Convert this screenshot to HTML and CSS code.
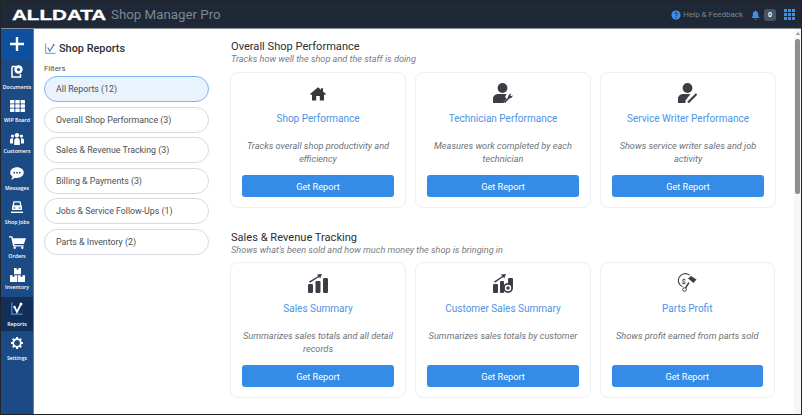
FILE: index.html
```html
<!DOCTYPE html>
<html lang="en">
<head>
<meta charset="utf-8">
<title>Shop Reports</title>
<link rel="stylesheet" href="styles.css">
</head>
<body>
<div class="app">
  <header class="topbar">
    <div class="brand"><span class="logo">ALLDATA</span><span class="product">Shop Manager Pro</span></div>
    <div class="top-actions">
      <svg class="help-ic" viewBox="0 0 12 12"><circle cx="6" cy="6" r="5.500" fill="#3d8fe8"/><path d="M4.400 4.700a1.600 1.600 0 1 1 2.400 1.400c-.5.3-.8.6-.8 1.100" fill="none" stroke="#1f2835" stroke-width="1.200"/><rect x="5.400" y="8.200" width="1.200" height="1.200" fill="#1f2835"/></svg>
      <span class="help">Help &amp; Feedback</span>
      <svg class="bell" viewBox="0 0 10 11"><path d="M5 0.500c.5 0 .8.300.8.800 1.500.4 2.200 1.500 2.200 3v2.400l1.200 1.500v.6H.8v-.6L2 6.700V4.300c0-1.500.7-2.600 2.200-3 0-.5.3-.8.8-.8zM3.800 9.600h2.400c0 .7-.5 1.100-1.200 1.100s-1.200-.4-1.200-1.100z" fill="#3d8fe8"/></svg>
      <span class="badge">0</span>
      <svg class="apps" viewBox="0 0 11 11"><g fill="#3d8fe8"><rect x="0" y="0" width="3" height="3"/><rect x="4" y="0" width="3" height="3"/><rect x="8" y="0" width="3" height="3"/><rect x="0" y="4" width="3" height="3"/><rect x="4" y="4" width="3" height="3"/><rect x="8" y="4" width="3" height="3"/><rect x="0" y="8" width="3" height="3"/><rect x="4" y="8" width="3" height="3"/><rect x="8" y="8" width="3" height="3"/></g></svg>
    </div>
  </header>
  <div class="body">
    <nav class="sidenav">
      <div class="add"><svg viewBox="0 0 14 14" class="add-ic"><path d="M5.800 0h2.400v5.800H14v2.400H8.200V14H5.800V8.200H0V5.800h5.800z" fill="#fff"/></svg></div>
      <a class="nav-item item-docs"><svg viewBox="0 0 12 13" class="nav-ic"><path d="M1 1.500h4M1 1.500v10.500h8.500V9" fill="none" stroke="#fff" stroke-width="1.500"/><circle cx="7.500" cy="4.500" r="4.200" fill="#fff"/><circle cx="7.500" cy="4.500" r="1.600" fill="#1b4a85"/></svg><span>Documents</span></a>
      <a class="nav-item item-wip"><svg viewBox="0 0 15 12" class="nav-ic"><g fill="#fff"><rect width="4.400" height="3.500" rx=".5"/><rect x="5.300" width="4.400" height="3.500" rx=".5"/><rect x="10.600" width="4.400" height="3.500" rx=".5"/><rect y="4.250" width="4.400" height="3.500" rx=".5"/><rect x="5.300" y="4.250" width="4.400" height="3.500" rx=".5"/><rect x="10.600" y="4.250" width="4.400" height="3.500" rx=".5"/><rect y="8.500" width="4.400" height="3.500" rx=".5"/><rect x="5.300" y="8.500" width="4.400" height="3.500" rx=".5"/><rect x="10.600" y="8.500" width="4.400" height="3.500" rx=".5"/></g></svg><span>WIP Board</span></a>
      <a class="nav-item item-cust"><svg viewBox="0 0 14 12" class="nav-ic"><g fill="#fff"><circle cx="7" cy="2.300" r="2.200"/><circle cx="2.500" cy="3" r="1.600"/><circle cx="11.500" cy="3" r="1.600"/><path d="M4.200 12V7.500c0-1.600 1.200-2.600 2.800-2.600s2.800 1 2.800 2.600V12zM0 10.500V7.200c0-1.200 1-1.900 2.100-1.900.5 0 .9.100 1.200.3C3 6.100 3 6.800 3 7.500v3zM14 10.500V7.200c0-1.200-1-1.900-2.100-1.900-.5 0-.9.100-1.200.3.300.5.300 1.200.3 1.900v3z"/></g></svg><span>Customers</span></a>
      <a class="nav-item item-msg"><svg viewBox="0 0 14 13" class="nav-ic"><path d="M7 .3c3.800 0 6.800 2.300 6.800 5.300S10.800 11 7 11c-.8 0-1.500-.1-2.200-.3C3.800 11.800 2.400 12.500 1 12.600c.8-.8 1.300-1.900 1.500-2.900C1.100 8.700.2 7.300.2 5.600.2 2.600 3.200.3 7 .3z" fill="#fff"/><g fill="#1b4a85"><circle cx="4.200" cy="5.700" r=".9"/><circle cx="7" cy="5.700" r=".9"/><circle cx="9.800" cy="5.700" r=".9"/></g></svg><span>Messages</span></a>
      <a class="nav-item item-jobs"><svg viewBox="0 0 12 12" class="nav-ic"><path d="M3 .8h6l1 4.200H2z" fill="none" stroke="#fff" stroke-width="1.300"/><path d="M1 5.200h10V9H1z" fill="#fff"/><rect x="2.500" y="6.500" width="1.700" height="1.100" fill="#1b4a85"/><rect x="7.800" y="6.500" width="1.700" height="1.100" fill="#1b4a85"/><rect x="0" y="10.600" width="12" height="1.400" fill="#fff"/></svg><span>Shop Jobs</span></a>
      <a class="nav-item item-orders"><svg viewBox="0 0 17 13" class="nav-ic"><path d="M0 .3h3.300l.7 2H17l-2.100 5.700H5.200l.5 1.200h9v1.200H4.200L2.200 1.500H0z" fill="#fff"/><circle cx="5.700" cy="11.800" r="1.200" fill="#fff"/><circle cx="13.300" cy="11.800" r="1.200" fill="#fff"/></svg><span>Orders</span></a>
      <a class="nav-item item-inv"><svg viewBox="0 0 15 14" class="nav-ic"><g fill="#fff"><path d="M4 0h2.700v1.800h1.600V0H11v6.300H4z"/><path d="M0 7.200h2.700V9h1.500V7.200h3V14H0z"/><path d="M7.800 7.200h3V9h1.500V7.200H15V14H7.800z"/></g></svg><span>Inventory</span></a>
      <a class="nav-item item-rep active"><svg viewBox="0 0 12 13" class="nav-ic"><path d="M.8 .5v11.700h10.700" fill="none" stroke="#3d8fe8" stroke-width="1.300"/><path d="M3.500 5l2.500 5 4-8" fill="none" stroke="#fff" stroke-width="1.700"/><circle cx="10" cy="2" r="1.500" fill="#fff"/><circle cx="3.500" cy="5" r="1.200" fill="#fff"/></svg><span>Reports</span></a>
      <a class="nav-item item-set"><svg viewBox="0 0 12 12" class="nav-ic"><circle cx="6" cy="6" r="3.800" fill="none" stroke="#fff" stroke-width="1.700"/><g stroke="#fff" stroke-width="2"><path d="M6 0v2M6 10v2M0 6h2M10 6h2M1.800 1.800l1.400 1.400M8.800 8.800l1.400 1.400M1.800 10.200l1.400-1.400M8.800 3.200l1.400-1.400"/></g></svg><span>Settings</span></a>
    </nav>
    <aside class="filters">
      <h1 class="filters-title"><svg viewBox="0 0 12 12" class="title-ic"><path d="M.7.5v10.800h10.800" fill="none" stroke="#4d93e6" stroke-width="1"/><path d="M3 5l2.200 4L9.500 2" fill="none" stroke="#3d6ea8" stroke-width="1.100"/><circle cx="9.500" cy="2" r="1" fill="#3d6ea8"/></svg>Shop Reports</h1>
      <div class="filters-label">Filters</div>
      <button class="pill selected">All Reports (12)</button>
      <button class="pill">Overall Shop Performance (3)</button>
      <button class="pill">Sales &amp; Revenue Tracking (3)</button>
      <button class="pill">Billing &amp; Payments (3)</button>
      <button class="pill">Jobs &amp; Service Follow-Ups (1)</button>
      <button class="pill">Parts &amp; Inventory (2)</button>
    </aside>
    <main class="content">
      <section class="group">
        <h2>Overall Shop Performance</h2>
        <p class="sub">Tracks how well the shop and the staff is doing</p>
        <div class="cards">
          <article class="card">
            <svg class="card-ic" viewBox="0 0 16 14"><path d="M8 .3l3 2.500V1.300h2v3.200l3 2.500-.8.700H14V13.500H9.800V9H6.200v4.500H2V7.700H.8L0 7z" fill="#33383f"/></svg>
            <h3>Shop Performance</h3>
            <p>Tracks overall shop productivity and efficiency</p>
            <button class="get">Get Report</button>
          </article>
          <article class="card">
            <svg class="card-ic big" viewBox="0 0 20 20"><circle cx="9.500" cy="5" r="4.900" fill="#3b3f45"/><path d="M0 20v-4.500c0-2.700 2.500-4.500 5.500-4.500h8l-1.500 3.200 1.500 1L10.500 20z" fill="#3b3f45"/><path d="M11.500 19.500l5-5.500" stroke="#3b3f45" stroke-width="1.800"/><path d="M15 14l1-2.500 2.500-1-1.200 1.800.8.900 1.700-.9-.8 2.200-2.500 1z" fill="#3b3f45"/></svg>
            <h3>Technician Performance</h3>
            <p>Measures work completed by each technician</p>
            <button class="get">Get Report</button>
          </article>
          <article class="card">
            <svg class="card-ic big" viewBox="0 0 20 20"><circle cx="9.500" cy="5" r="4.900" fill="#3b3f45"/><path d="M0 20v-4.500c0-2.700 2.500-4.500 5.500-4.500h7l-5 6.500V20z" fill="#3b3f45"/><path d="M10 19.500l8.500-8.500" stroke="#3b3f45" stroke-width="2.200"/></svg>
            <h3>Service Writer Performance</h3>
            <p>Shows service writer sales and job activity</p>
            <button class="get">Get Report</button>
          </article>
        </div>
      </section>
      <section class="group">
        <h2>Sales &amp; Revenue Tracking</h2>
        <p class="sub">Shows what's been sold and how much money the shop is bringing in</p>
        <div class="cards">
          <article class="card">
            <svg class="card-ic big" viewBox="0 0 20 20"><g fill="#3b3f45"><rect x="0" y="11" width="5" height="9" rx="1.200"/><rect x="7.500" y="8" width="5" height="12" rx="1.200"/><rect x="15" y="5" width="5" height="15" rx="1.200"/><path d="M1 8.500L10 3.300 9 1.500l5-.5-1.800 4.500-1.100-1.600L2 9.800z"/></g></svg>
            <h3>Sales Summary</h3>
            <p>Summarizes sales totals and all detail records</p>
            <button class="get">Get Report</button>
          </article>
          <article class="card">
            <svg class="card-ic big" viewBox="0 0 20 20"><g fill="#3b3f45"><rect x="0" y="11" width="5" height="9" rx="1"/><rect x="7" y="8" width="4" height="12" rx="1"/><rect x="15" y="5" width="5" height="9" rx="1"/><path d="M1 8.500L9 3.300 8 1.500l5-.5-1.800 4.500-1.100-1.600L2 9.800z"/><circle cx="15" cy="15" r="5"/></g><circle cx="15" cy="15" r="3.200" fill="#fff"/><circle cx="15" cy="15" r="1.700" fill="#3b3f45"/></svg>
            <h3>Customer Sales Summary</h3>
            <p>Summarizes sales totals by customer</p>
            <button class="get">Get Report</button>
          </article>
          <article class="card narrow-card">
            <svg class="card-ic big" viewBox="0 0 20 20"><path d="M12.500 2.200A6.800 6.800 0 1 0 5.500 13.700" fill="none" stroke="#3b3f45" stroke-width="1.100"/><text x="4.800" y="10.500" class="dollar">$</text><path d="M11 5.500l3-2.500 5.500 3.500-3 3.500z" fill="#3b3f45"/><path d="M12 9.500l-3.500 5.500" stroke="#3b3f45" stroke-width="1.400"/><circle cx="7.500" cy="16.500" r="1.800" fill="none" stroke="#3b3f45" stroke-width="1"/></svg>
            <h3>Parts Profit</h3>
            <p>Shows profit earned from parts sold</p>
            <button class="get">Get Report</button>
          </article>
        </div>
      </section>
    </main>
    <div class="scrollbar" aria-hidden="true"><span class="arrow"></span><span class="thumb"></span></div>
  </div>
</div>
</body>
</html>
```
FILE: styles.css
```css
* { box-sizing: border-box; }
html, body { margin: 0; height: 100%; overflow: hidden; }
body { font-family: Roboto, "Liberation Sans", sans-serif; background: #fff; }
.app { width: 802px; height: 415px; border: 1px solid #20242a; display: flex; flex-direction: column; overflow: hidden; }
.topbar { height: 28px; flex: none; background: #1f2836; border-bottom: 1px solid #8a8f96; display: flex; align-items: center; justify-content: space-between; padding: 0 6px 0 11px; }
.brand { display: flex; align-items: center; }
.logo { display: inline-block; width: 99px; font: bold 14.500px "Liberation Sans", sans-serif; color: #fff; transform: scaleX(1.42); transform-origin: left center; -webkit-text-stroke: .3px #fff; }
.product { font-size: 13.300px; color: #7c8797; }
.top-actions { display: flex; align-items: center; }
.help-ic { width: 10px; height: 10px; margin-right: 2px; }
.help { font-size: 8px; color: #7c8797; margin-right: 8px; }
.bell { width: 9px; height: 10px; margin-right: 4px; }
.badge { width: 12px; height: 12px; border-radius: 3px; background: #4a5461; color: #fff; font-size: 7px; font-weight: 700; text-align: center; line-height: 12px; margin-right: 8px; }
.apps { width: 11px; height: 11px; }
.body { flex: 1; display: flex; min-height: 0; }
.sidenav { width: 33px; flex: none; background: #1b4a85; border-right: 1px solid #5e7ea8; }
.add { height: 30px; background: #0f509e; display: flex; align-items: center; justify-content: center; }
.add-ic { width: 14px; height: 14px; }
.nav-item { height: 34px; display: flex; flex-direction: column; align-items: center; justify-content: flex-end; color: #fff; font: 600 5.200px "Open Sans", Roboto, sans-serif; line-height: 6px; padding-bottom: 4px; }
.nav-item.active { background: #122f59; }
.nav-ic { flex: none; }
.item-docs { padding-bottom: 3px; }
.item-docs .nav-ic { width: 12px; height: 13px; margin-bottom: 6px; }
.item-wip .nav-ic { width: 15px; height: 12px; margin-bottom: 5px; }
.item-cust { padding-bottom: 7px; }
.item-cust .nav-ic { width: 14px; height: 12px; margin-bottom: 3px; }
.item-msg .nav-ic { width: 14px; height: 13px; margin-bottom: 5px; }
.item-jobs .nav-ic { width: 12px; height: 12px; margin-bottom: 6px; }
.item-orders .nav-ic { width: 17px; height: 13px; margin-bottom: 4px; }
.item-inv { padding-bottom: 7px; }
.item-inv .nav-ic { width: 15px; height: 14px; margin-bottom: 2px; }
.item-rep .nav-ic { width: 12px; height: 13px; margin-bottom: 6px; }
.item-set .nav-ic { width: 12px; height: 12px; margin-bottom: 6px; }
.filters { width: 196px; flex: none; padding: 12px 0 0 10px; }
.filters-title { margin: 0; display: flex; align-items: center; font-size: 10.900px; font-weight: 500; color: #2a2f36; height: 14px; padding-left: 1px; }
.title-ic { width: 11px; height: 11px; margin-right: 3px; }
.filters-label { font-size: 7.800px; color: #4a4f56; margin: 9px 0 2px; line-height: 10px; }
.pill { display: block; width: 165px; height: 26px; margin-bottom: 4.600px; padding: 0 11px; text-align: left; background: #fff; border: 1px solid #d6d9dd; border-radius: 13px; font: 8.800px Roboto, sans-serif; color: #4a4f56; }
.pill.selected { background: #e9f3fd; border-color: #80b6ef; }
.content { flex: 1; min-width: 0; padding: 11px 0 0 0; }
.group { margin-bottom: 23px; }
h2 { margin: 0; padding-left: 1px; font-size: 11.100px; font-weight: 400; color: #2a2f36; line-height: 14px; }
.sub { margin: 0 0 8px; padding-left: 1px; font-size: 9.150px; font-style: italic; color: #777c83; line-height: 10px; }
.group + .group .sub { margin-bottom: 7px; }
.cards { display: flex; gap: 9px; }
.card { width: 176px; height: 136px; flex: none; background: #fff; border: 1px solid #edeff1; border-radius: 8px; padding: 10px 11px 10px; display: flex; flex-direction: column; align-items: center; }
.narrow-card { width: 174.500px; }
.card-ic { width: 16px; height: 14px; margin: 4px 0 2px; flex: none; }
.card-ic.big { width: 20px; height: 20px; margin: 0; }
.card h3 { margin: 9px 0 0; font-size: 10px; font-weight: 400; color: #4d93e6; line-height: 14px; }
.card p { margin: 13px 0 0; flex: 1; font-size: 9.200px; font-style: italic; color: #6e7379; text-align: center; line-height: 13px; }
.get { width: 100%; height: 22px; flex: none; background: #348ce6; border: 0; border-radius: 3px; color: #fff; font: 400 9.200px Roboto, sans-serif; }
.dollar { font: bold 7px Roboto, sans-serif; fill: #3b3f45; }
.scrollbar { width: 7px; flex: none; background: #f7f7f7; display: flex; flex-direction: column; align-items: center; padding-top: 3px; }
.arrow { width: 0; height: 0; border-left: 2.500px solid transparent; border-right: 2.500px solid transparent; border-bottom: 3px solid #9a9a9a; margin-bottom: 4px; }
.thumb { width: 4.500px; height: 155px; background: #8e8e8e; border-radius: 2px; }
```
